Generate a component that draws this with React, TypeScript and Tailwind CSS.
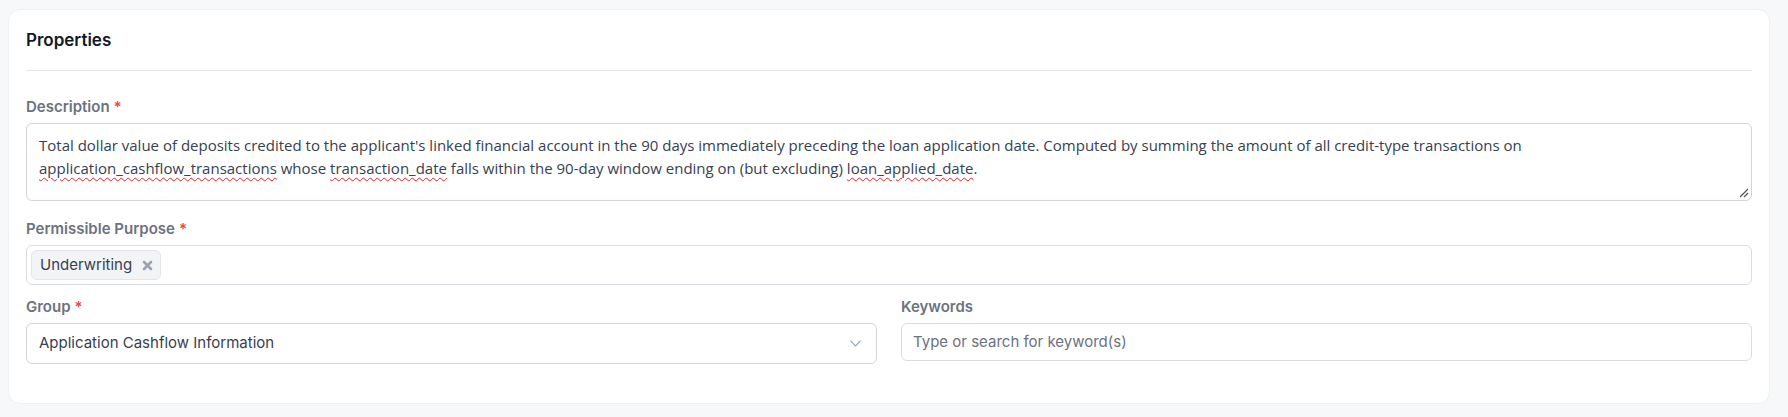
import React from "react";
import { ChevronDown } from "lucide-react";

const Label = ({ text, required }: { text: string; required?: boolean }) => (
  <label className="block text-[15px] leading-5 font-semibold text-[#6b7280] mb-1.5">
    {text}
    {required && <span className="ml-1 text-[#ef4444]">*</span>}
  </label>
);

const Squiggle = ({ children }: { children: React.ReactNode }) => (
  <span className="underline decoration-wavy decoration-[#e02424] decoration-1 underline-offset-[3px]">
    {children}
  </span>
);

const App = () => {
  return (
    <div className="w-[1788px] h-[417px] bg-[#f7f8fa] pt-[9px] pl-2 pr-[18px] font-['Inter',sans-serif]">
      <div className="bg-white rounded-xl border border-[#eef0f3] h-[395px]">
        <div className="px-[17px]">
          <div className="pt-[16px] pb-[16px] border-b border-[#e5e7eb]">
            <h2 className="text-[17px] leading-7 font-semibold text-[#111827]">Properties</h2>
          </div>
        </div>

        <div className="px-[17px] pt-[26px]">
          <div>
            <Label text="Description" required />
            <div className="relative h-[78px] rounded-md border border-[#d1d5db] px-[12px] pt-[10px] text-[15px] leading-[23px] text-[#374151] font-['Open_Sans',sans-serif]">
              Total dollar value of deposits credited to the applicant's linked financial account in the 90 days
              immediately preceding the loan application date. Computed by summing the amount of all credit-type
              transactions on <Squiggle>application_cashflow_transactions</Squiggle> whose{" "}
              <Squiggle>transaction_date</Squiggle> falls within the 90-day window ending on (but excluding){" "}
              <Squiggle>loan_applied_date</Squiggle>.
              <svg
                className="absolute right-[2px] bottom-[2px]"
                width="11"
                height="11"
                viewBox="0 0 11 11"
              >
                <path d="M10 2 L2 10 M10 6 L6 10" stroke="#555" strokeWidth="1.2" />
              </svg>
            </div>
          </div>

          <div className="mt-[18px]">
            <Label text="Permissible Purpose" required />
            <div className="h-[40px] rounded-md border border-[#d9dce1] flex items-center px-1">
              <span className="h-[30px] flex items-center gap-2.5 rounded-md border border-[#e3e5e9] bg-[#f3f4f6] pl-[8px] pr-[7px] text-[15px] text-[#374151]">
                Underwriting
                <svg width="11" height="11" viewBox="0 0 11 11">
                  <path d="M2 2 L9 9 M9 2 L2 9" stroke="#9ca3af" strokeWidth="2.6" strokeLinecap="round" />
                </svg>
              </span>
            </div>
          </div>

          <div className="grid grid-cols-2 gap-6 mt-[12px]">
            <div>
              <Label text="Group" required />
              <div className="h-[41px] rounded-md border border-[#d1d5db] flex items-center justify-between pl-[12px] pr-[11px] text-[15px] text-[#374151]">
                <span>Application Cashflow Information</span>
                <ChevronDown size={19} strokeWidth={1.5} className="text-[#94a3b8]" />
              </div>
            </div>
            <div>
              <Label text="Keywords" />
              <div className="h-[38px] rounded-md border border-[#d9dce1] flex items-center pl-[11px] text-[15px] text-[#6b7280]">
                Type or search for keyword(s)
              </div>
            </div>
          </div>
        </div>
      </div>
    </div>
  );
};

export default App;
